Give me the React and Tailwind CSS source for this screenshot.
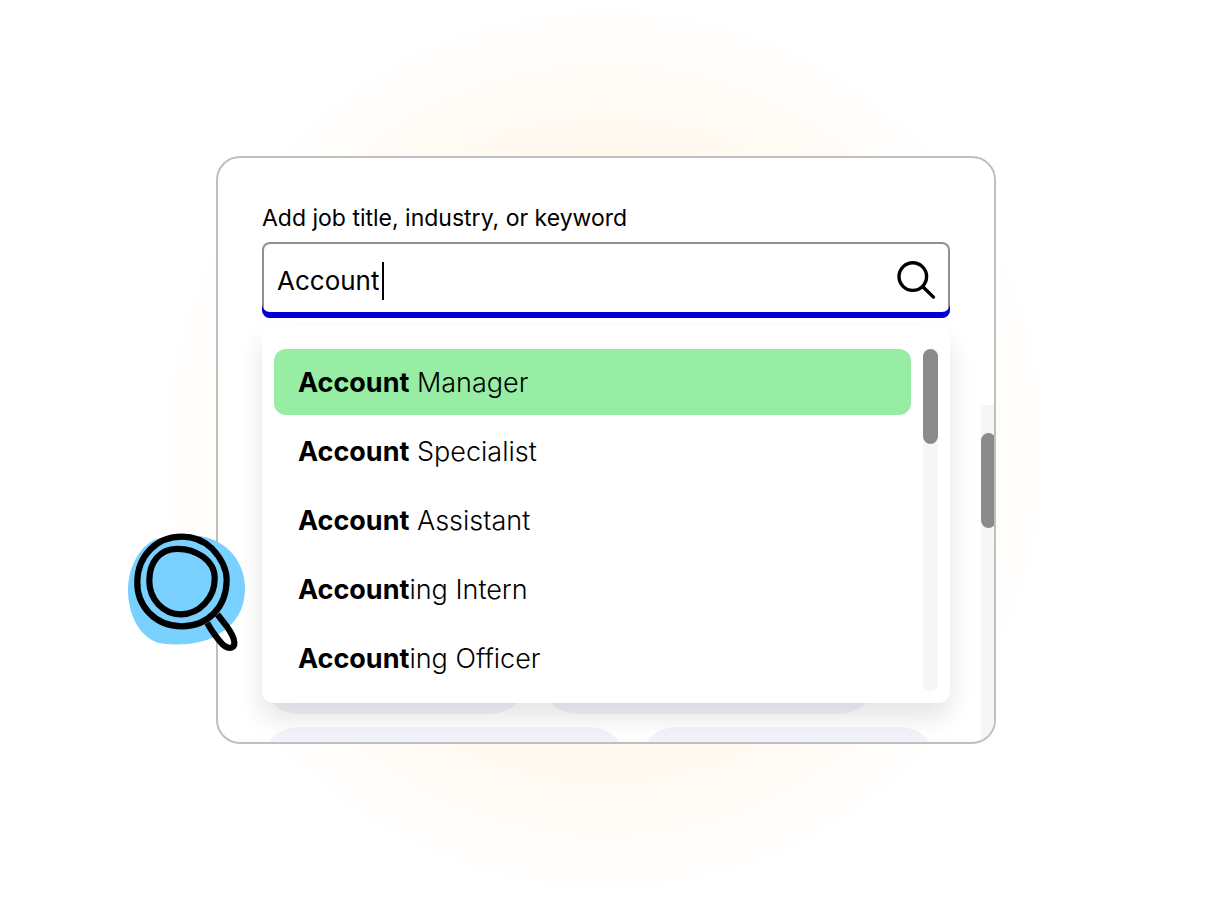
import React, { useState } from "react";

const OPTIONS = [
  { match: "Account", rest: " Manager" },
  { match: "Account", rest: " Specialist" },
  { match: "Account", rest: " Assistant" },
  { match: "Account", rest: "ing Intern" },
  { match: "Account", rest: "ing Officer" },
];

function SearchIcon() {
  return (
    <svg viewBox="0 0 40 40" className="size-10" fill="none" stroke="#000" strokeWidth="3.4" strokeLinecap="round" aria-hidden="true">
      <circle cx="16.8" cy="15.6" r="13.8" />
      <path d="M26.8 25.7 37.5 36.1" />
    </svg>
  );
}

function Magnifier() {
  return (
    <svg
      viewBox="0 0 120 122"
      className="absolute -left-[89px] bottom-[91px] w-[120px]"
      fill="none"
      aria-hidden="true"
    >
      <path
        d="M1 59C1 38 12 14 30 8C46 3 62 3 75 5.500C101 10 118 32 118 57C118 80 107 95 90 104C74 114 50 115 32 112C12 106 1 83 1 59Z"
        fill="#7ad0ff"
      />
      <g stroke="#000" strokeWidth="6.2" strokeLinejoin="round">
        <path d="M10.300 50C11 25 29 5.700 55 5.700C67 5.700 77 10 85 17.500C93 26 99.700 37 99.700 49C99.500 76 81 95.300 55 95.300C28 95.300 9.500 75 10.300 50Z" />
        <path d="M22.300 49.700C22.300 31 33 18 50 17.800C68 17.500 87.700 29 87.700 47C88 67 72 83.300 54 83.300C36 83.300 22.300 68 22.300 49.700Z" />
        <path d="M80.300 92C84 99 88.500 105 93 110.500C97 115.500 101 117.500 104.500 116.500C107.500 115.500 108 112 106.500 107.500C104 99 97 92 90.500 83.500" />
      </g>
    </svg>
  );
}

export default function App() {
  const [query, setQuery] = useState("Account");
  const [selected, setSelected] = useState(0);

  return (
    <main className="flex min-h-screen items-center justify-center bg-white bg-[radial-gradient(circle_at_50%_50%,#fff2dc_0px,#fff8ec_290px,#fffcf7_370px,#ffffff_450px)] px-6 font-[Inter,'Liberation_Sans',sans-serif] text-black">
      <div className="relative w-full max-w-[780px]">
        <section className="flex overflow-hidden rounded-3xl border-2 border-[#bfbfbf] bg-white">
          <div className="min-w-0 flex-1 pt-[46px] pr-[31px] pl-11">
            <label htmlFor="job-search" className="block text-[23px] leading-7">
              Add job title, industry, or keyword
            </label>
            <div className="mt-[10px] flex h-[76px] items-center rounded-lg bg-white pt-0.5 pr-[14px] pl-[15px] shadow-[inset_0_-6px_0_#0000d6,inset_0_0_0_2px_#919191]">
              <input
                id="job-search"
                type="text"
                value={query}
                onChange={(e) => setQuery(e.target.value)}
                autoComplete="off"
                className="field-sizing-content max-w-full bg-transparent text-[26px] leading-9 caret-transparent outline-none"
              />
              <span className="ml-[3px] h-[38px] w-[2px] bg-black" />
              <button type="button" aria-label="Search" className="ml-auto">
                <SearchIcon />
              </button>
            </div>

            <div className="relative z-10 mt-[7px] flex gap-3 rounded-xl bg-white px-3 pt-6 pb-3 shadow-[0_14px_26px_rgba(0,0,0,0.11)]">
              <ul role="listbox" aria-label="Suggestions" className="flex flex-1 flex-col gap-[3px]">
                {OPTIONS.map((o, i) => (
                  <li key={o.rest} role="option" aria-selected={i === selected}>
                    <button
                      type="button"
                      onClick={() => setSelected(i)}
                      className={
                        i === selected
                          ? "h-[66px] w-full rounded-xl bg-[#96eda3] px-6 pt-0.5 text-left text-[27px] leading-9 font-light whitespace-pre"
                          : "h-[66px] w-full rounded-xl px-6 pt-0.5 text-left text-[27px] leading-9 font-light whitespace-pre"
                      }
                    >
                      <span className="font-bold">{o.match}</span>
                      {o.rest}
                    </button>
                  </li>
                ))}
              </ul>
              <div className="w-[15px] rounded-full bg-[#f6f6f6]">
                <div className="h-[95px] rounded-full bg-[#8b8b8b]" />
              </div>
            </div>

            <div className="-mt-[61px] flex h-[100px] flex-col gap-[13px] overflow-hidden" aria-hidden="true">
              <div className="flex shrink-0 gap-[14px]">
                <div className="h-[72px] w-[265px] rounded-full bg-[#f2f3fa]" />
                <div className="h-[72px] w-[335px] rounded-full bg-[#f2f3fa]" />
              </div>
              <div className="flex shrink-0 gap-[14px]">
                <div className="h-[72px] w-[364px] rounded-full bg-[#f2f3fa]" />
                <div className="h-[72px] w-[296px] rounded-full bg-[#f2f3fa]" />
              </div>
            </div>
          </div>
          <div className="mt-[247px] w-[13px] overflow-hidden bg-[#f6f6f6] pt-7">
            <div className="h-[95px] w-[15px] rounded-full bg-[#8b8b8b]" />
          </div>
        </section>
        <Magnifier />
      </div>
    </main>
  );
}
